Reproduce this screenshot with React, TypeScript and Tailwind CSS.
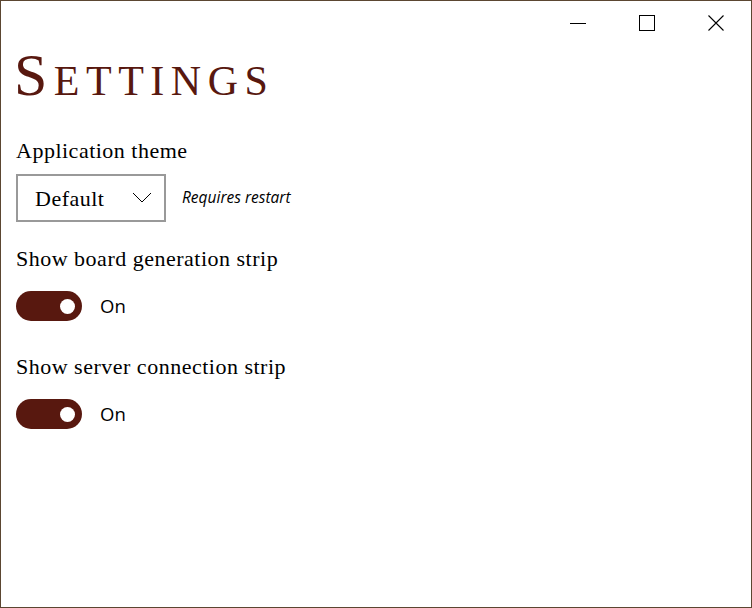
import React, { useState } from 'react';

const serif = "font-['Liberation_Serif','Times_New_Roman',serif]";
const sans = "font-['Open_Sans','Liberation_Sans',sans-serif]";

function Toggle({ on, onChange }: { on: boolean; onChange: () => void }) {
  return (
    <div className="flex items-center gap-[18px]">
      <button
        onClick={onChange}
        className={`relative w-[66px] h-[30px] rounded-full flex items-center ${
          on ? 'bg-[#58180f] justify-end' : 'bg-white border-2 border-gray-700 justify-start'
        }`}
      >
        <span className={`w-[15px] h-[15px] rounded-full mx-[7px] ${on ? 'bg-white' : 'bg-gray-700'}`} />
      </button>
      <span className={`${sans} text-[18.5px] text-black`}>{on ? 'On' : 'Off'}</span>
    </div>
  );
}

export default function App() {
  const [boardStrip, setBoardStrip] = useState(true);
  const [serverStrip, setServerStrip] = useState(true);

  return (
    <div className="w-[752px] h-[608px] bg-white border border-[#5b4631] flex flex-col overflow-hidden">
      {/* title bar */}
      <div className="flex justify-end h-[44px]">
        <button className="w-[69px] flex items-center justify-center">
          <svg width="16" height="16" viewBox="0 0 16 16"><path d="M0 8.5h16" stroke="black" strokeWidth="1" /></svg>
        </button>
        <button className="w-[69px] flex items-center justify-center">
          <svg width="16" height="16" viewBox="0 0 16 16"><rect x="0.5" y="0.5" width="15" height="15" fill="none" stroke="black" /></svg>
        </button>
        <button className="w-[69px] flex items-center justify-center mr-[1px]">
          <svg width="16" height="16" viewBox="0 0 16 16"><path d="M0.5 0.5l15 15M15.5 0.5l-15 15" stroke="black" strokeWidth="1.1" /></svg>
        </button>
      </div>

      <div className="px-[15px]">
        <h1 className={`${serif} -ml-[2px] text-[60px] leading-[60px] text-[#58180f] [font-variant:small-caps] tracking-[6.5px]`}>
          Settings
        </h1>

        <div className={`${serif} text-[22px] tracking-[0.5px] text-black mt-[32px] leading-[28px]`}>Application theme</div>
        <div className="flex items-center gap-[16px] mt-[9px]">
          <button className="w-[150px] h-[48px] border-2 border-[#999999] flex items-center justify-between pl-[17px] pr-[12px]">
            <span className={`${serif} text-[22px] tracking-[0.5px] text-black`}>Default</span>
            <svg width="20" height="12" viewBox="0 0 20 12"><path d="M1 1l9 9 9-9" fill="none" stroke="black" strokeWidth="1" /></svg>
          </button>
          <span className={`${sans} italic text-[15.5px] text-black`}>Requires restart</span>
        </div>

        <div className={`${serif} text-[22px] tracking-[0.5px] text-black mt-[23px] leading-[28px]`}>Show board generation strip</div>
        <div className="mt-[18px]">
          <Toggle on={boardStrip} onChange={() => setBoardStrip(!boardStrip)} />
        </div>

        <div className={`${serif} text-[22px] tracking-[0.5px] text-black mt-[32px] leading-[28px]`}>Show server connection strip</div>
        <div className="mt-[18px]">
          <Toggle on={serverStrip} onChange={() => setServerStrip(!serverStrip)} />
        </div>
      </div>
    </div>
  );
}
